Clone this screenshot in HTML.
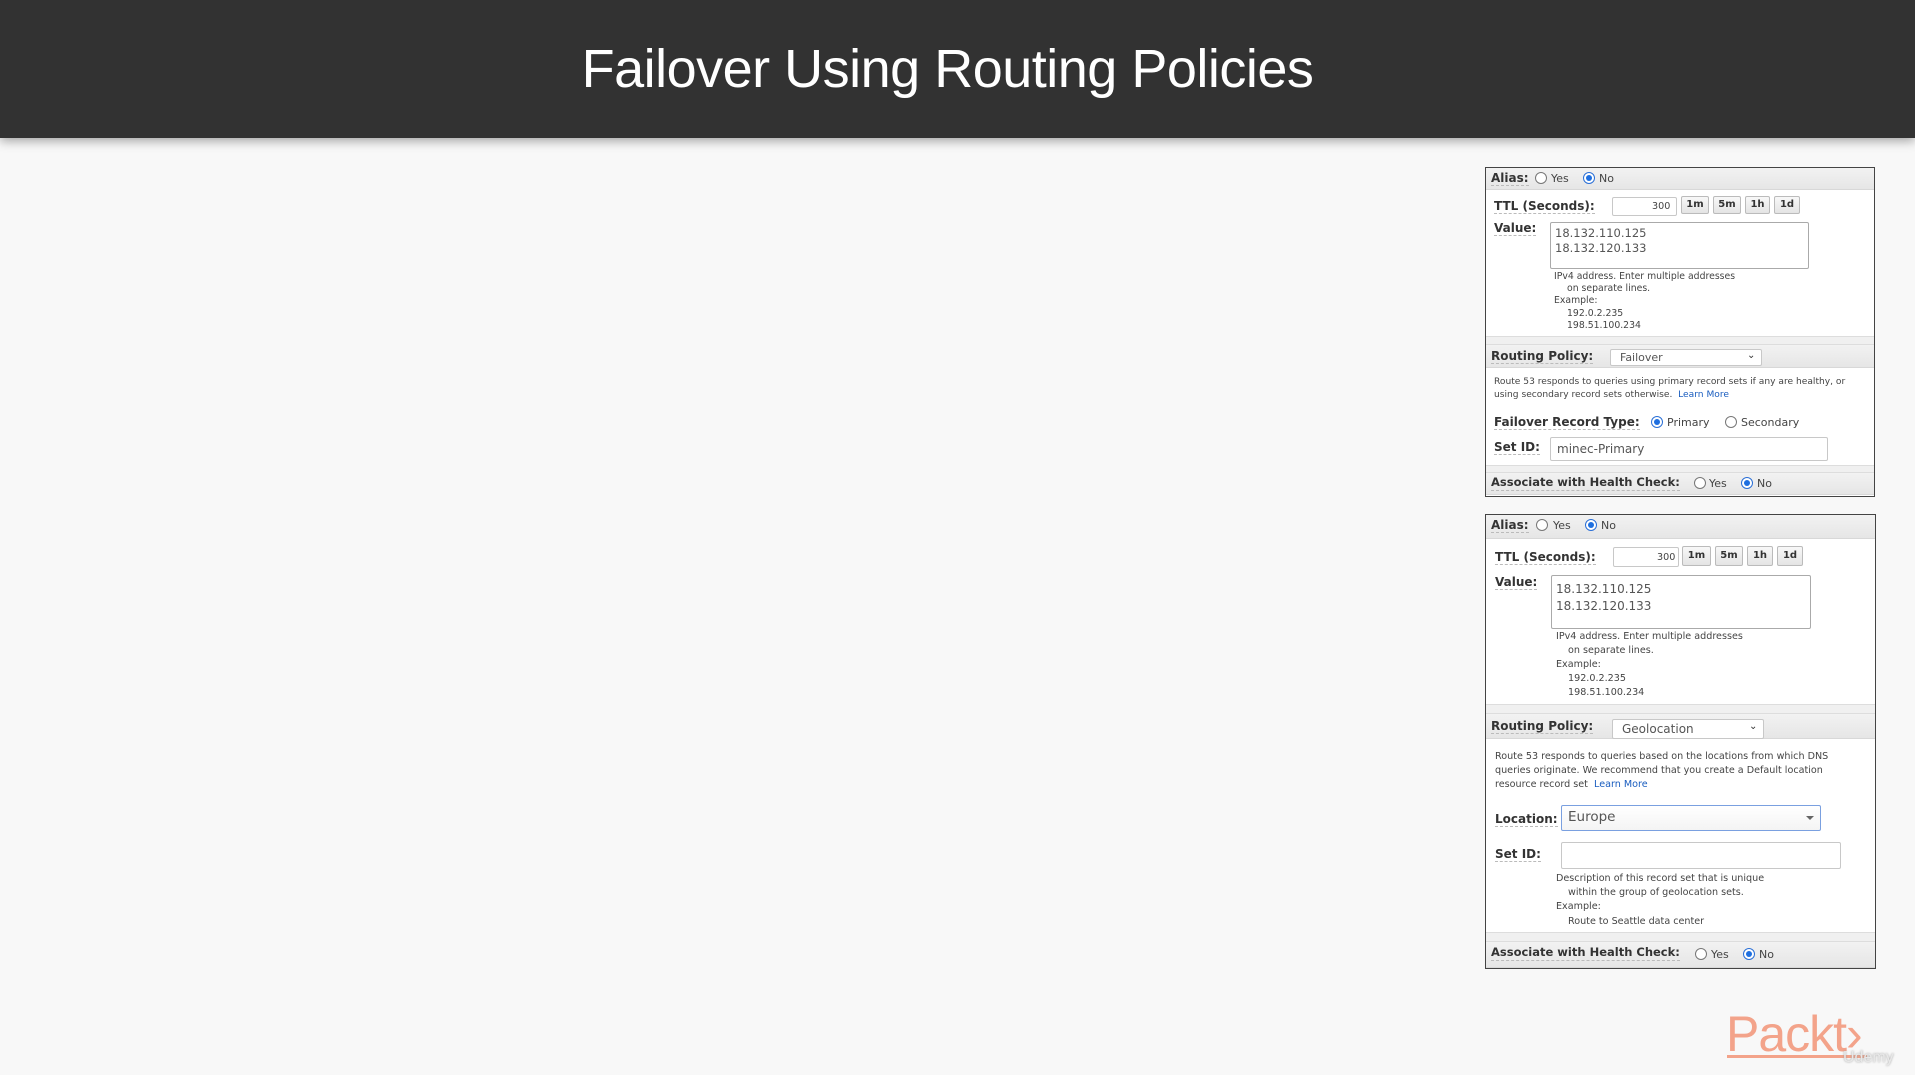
<!DOCTYPE html>
<html><head><meta charset="utf-8"><style>
*{margin:0;padding:0;box-sizing:border-box}
body{width:1915px;height:1075px;background:#f8f8f8;position:relative;overflow:hidden;font-family:"DejaVu Sans","Liberation Sans",sans-serif}
.hdr{position:absolute;left:0;top:0;width:1915px;height:138px;background:#323232;box-shadow:0 3px 10px rgba(0,0,0,.35)}
.title{position:absolute;left:0;top:0;width:1915px;text-align:center;color:#fff;font-family:"Liberation Sans",sans-serif;font-size:54px;line-height:138px;letter-spacing:-0.5px;padding-right:20px}
.panel{position:absolute;background:#fff;border:1.5px solid #444}
.bar{position:absolute;left:0;right:0;background:linear-gradient(#f2f2f2,#e6e6e6);border-bottom:1px solid #d8d8d8}
.gap{position:absolute;left:0;right:0;background:#f0f0f0;border-top:1px solid #ddd;border-bottom:1px solid #ddd}
.t{position:absolute;white-space:nowrap;color:#333;line-height:1}
.b{font-weight:bold;font-size:12px;color:#333;border-bottom:1px dashed #bbb;padding-bottom:1px}
.s{font-size:9.6px;color:#444}
.box{position:absolute;background:#fff;border:1px solid #c8c8c8;border-radius:2px}
.btn{position:absolute;background:linear-gradient(#f8f8f8,#e4e4e4);border:1px solid #bbb;border-radius:2px;font-size:10px;font-weight:bold;text-align:center;color:#333}
.r{position:absolute;width:12px;height:12px;border:1px solid #777;border-radius:50%;background:#fff}
.r.on{border-color:#2a6fd6}
.r.on::after{content:"";position:absolute;left:2px;top:2px;width:6px;height:6px;border-radius:50%;background:#1e6fe0}
.lnk{color:#1a5dbf}
</style></head><body>
<div class="hdr"></div>
<div class="title">Failover Using Routing Policies</div>

<!-- Panel 1 -->
<div class="panel" style="left:1485px;top:167px;width:390px;height:330px"></div>
<div class="bar" style="left:1486px;top:168px;width:388px;height:22px;position:absolute"></div>
<div class="t b" style="left:1491px;top:172px">Alias:</div>
<div class="r" style="left:1535px;top:172px"></div><div class="t s" style="left:1551px;top:173px;font-size:11px">Yes</div>
<div class="r on" style="left:1583px;top:172px"></div><div class="t s" style="left:1599px;top:173px;font-size:11px">No</div>
<div class="t b" style="left:1494px;top:200px">TTL (Seconds):</div>
<div class="box" style="left:1612px;top:197px;width:65px;height:19px"></div><div class="t s" style="left:1652px;top:202px">300</div>
<div class="btn" style="left:1681px;top:196px;width:28px;height:18px;line-height:16px">1m</div>
<div class="btn" style="left:1713px;top:196px;width:28px;height:18px;line-height:16px">5m</div>
<div class="btn" style="left:1745px;top:196px;width:25px;height:18px;line-height:16px">1h</div>
<div class="btn" style="left:1774px;top:196px;width:26px;height:18px;line-height:16px">1d</div>
<div class="t b" style="left:1494px;top:222px">Value:</div>
<div class="box" style="left:1550px;top:222px;width:259px;height:47px;border-color:#aaa"></div>
<div class="t" style="left:1555px;top:228px;font-size:11.5px;color:#555">18.132.110.125</div>
<div class="t" style="left:1555px;top:243px;font-size:11.5px;color:#555">18.132.120.133</div>
<div class="t s" style="left:1554px;top:272px;font-size:9.3px">IPv4 address. Enter multiple addresses</div>
<div class="t s" style="left:1567px;top:284px;font-size:9.3px">on separate lines.</div>
<div class="t s" style="left:1554px;top:296px;font-size:9.3px">Example:</div>
<div class="t s" style="left:1567px;top:309px;font-size:9.3px">192.0.2.235</div>
<div class="t s" style="left:1567px;top:321px;font-size:9.3px">198.51.100.234</div>
<div class="gap" style="left:1486px;top:336px;width:388px;height:9px;position:absolute"></div>
<div class="bar" style="left:1486px;top:345px;width:388px;height:23px;position:absolute"></div>
<div class="t b" style="left:1491px;top:350px">Routing Policy:</div>
<div class="box" style="left:1610px;top:349px;width:152px;height:17px"></div>
<div class="t" style="left:1620px;top:352px;font-size:11px;color:#555">Failover</div>
<div class="t" style="left:1747px;top:351px;font-size:10px;color:#333">&#8964;</div>
<div class="t s" style="left:1494px;top:378px;font-size:9.1px">Route 53 responds to queries using primary record sets if any are healthy, or</div>
<div class="t s" style="left:1494px;top:391px;font-size:9.1px">using secondary record sets otherwise.&nbsp; <span class="lnk">Learn More</span></div>
<div class="t b" style="left:1494px;top:416px">Failover Record Type:</div>
<div class="r on" style="left:1651px;top:416px"></div><div class="t s" style="left:1667px;top:417px;font-size:11px">Primary</div>
<div class="r" style="left:1725px;top:416px"></div><div class="t s" style="left:1741px;top:417px;font-size:11px">Secondary</div>
<div class="t b" style="left:1494px;top:441px">Set ID:</div>
<div class="box" style="left:1550px;top:437px;width:278px;height:24px"></div>
<div class="t" style="left:1557px;top:443px;font-size:12px;color:#555">minec-Primary</div>
<div class="gap" style="left:1486px;top:465px;width:388px;height:8px;position:absolute"></div>
<div class="bar" style="left:1486px;top:473px;width:388px;height:22px;position:absolute"></div>
<div class="t b" style="left:1491px;top:477px;font-size:11.5px">Associate with Health Check:</div>
<div class="r" style="left:1694px;top:477px"></div><div class="t s" style="left:1709px;top:478px;font-size:11px">Yes</div>
<div class="r on" style="left:1741px;top:477px"></div><div class="t s" style="left:1757px;top:478px;font-size:11px">No</div>

<!-- Panel 2 -->
<div class="panel" style="left:1485px;top:514px;width:391px;height:455px"></div>
<div class="bar" style="left:1486px;top:515px;width:389px;height:24px;position:absolute"></div>
<div class="t b" style="left:1491px;top:519px">Alias:</div>
<div class="r" style="left:1536px;top:519px"></div><div class="t s" style="left:1553px;top:520px;font-size:11px">Yes</div>
<div class="r on" style="left:1585px;top:519px"></div><div class="t s" style="left:1601px;top:520px;font-size:11px">No</div>
<div class="t b" style="left:1495px;top:551px">TTL (Seconds):</div>
<div class="box" style="left:1613px;top:547px;width:66px;height:20px"></div><div class="t s" style="left:1657px;top:553px">300</div>
<div class="btn" style="left:1682px;top:546px;width:29px;height:20px;line-height:18px">1m</div>
<div class="btn" style="left:1715px;top:546px;width:28px;height:20px;line-height:18px">5m</div>
<div class="btn" style="left:1747px;top:546px;width:26px;height:20px;line-height:18px">1h</div>
<div class="btn" style="left:1777px;top:546px;width:26px;height:20px;line-height:18px">1d</div>
<div class="t b" style="left:1495px;top:576px">Value:</div>
<div class="box" style="left:1551px;top:575px;width:260px;height:54px;border-color:#aaa"></div>
<div class="t" style="left:1556px;top:583px;font-size:12px;color:#555">18.132.110.125</div>
<div class="t" style="left:1556px;top:600px;font-size:12px;color:#555">18.132.120.133</div>
<div class="t s" style="left:1556px;top:632px">IPv4 address. Enter multiple addresses</div>
<div class="t s" style="left:1568px;top:646px">on separate lines.</div>
<div class="t s" style="left:1556px;top:660px">Example:</div>
<div class="t s" style="left:1568px;top:674px">192.0.2.235</div>
<div class="t s" style="left:1568px;top:688px">198.51.100.234</div>
<div class="gap" style="left:1486px;top:704px;width:389px;height:10px;position:absolute"></div>
<div class="bar" style="left:1486px;top:714px;width:389px;height:25px;position:absolute"></div>
<div class="t b" style="left:1491px;top:720px">Routing Policy:</div>
<div class="box" style="left:1612px;top:719px;width:152px;height:20px"></div>
<div class="t" style="left:1622px;top:723px;font-size:12px;color:#555">Geolocation</div>
<div class="t" style="left:1749px;top:722px;font-size:10px;color:#333">&#8964;</div>
<div class="t s" style="left:1495px;top:752px">Route 53 responds to queries based on the locations from which DNS</div>
<div class="t s" style="left:1495px;top:766px">queries originate. We recommend that you create a Default location</div>
<div class="t s" style="left:1495px;top:780px">resource record set&nbsp; <span class="lnk">Learn More</span></div>
<div class="t b" style="left:1495px;top:813px">Location:</div>
<div class="box" style="left:1561px;top:805px;width:260px;height:26px;border-color:#7aa0e0;border-width:1.5px;background:linear-gradient(#fff,#f4f4f4)"></div>
<div class="t" style="left:1568px;top:811px;font-size:13.5px;color:#555">Europe</div>
<div style="position:absolute;left:1806px;top:816px;width:0;height:0;border-left:4px solid transparent;border-right:4px solid transparent;border-top:4px solid #666"></div>
<div class="t b" style="left:1495px;top:848px">Set ID:</div>
<div class="box" style="left:1561px;top:842px;width:280px;height:27px"></div>
<div class="t s" style="left:1556px;top:874px">Description of this record set that is unique</div>
<div class="t s" style="left:1568px;top:888px">within the group of geolocation sets.</div>
<div class="t s" style="left:1556px;top:902px">Example:</div>
<div class="t s" style="left:1568px;top:917px">Route to Seattle data center</div>
<div class="gap" style="left:1486px;top:932px;width:389px;height:10px;position:absolute"></div>
<div class="bar" style="left:1486px;top:942px;width:389px;height:26px;position:absolute"></div>
<div class="t b" style="left:1491px;top:947px;font-size:11.5px">Associate with Health Check:</div>
<div class="r" style="left:1695px;top:948px"></div><div class="t s" style="left:1711px;top:949px;font-size:11px">Yes</div>
<div class="r on" style="left:1743px;top:948px"></div><div class="t s" style="left:1759px;top:949px;font-size:11px">No</div>

<!-- Packt logo -->
<div class="t" style="left:1726px;top:1009px;font-family:'Liberation Sans',sans-serif;font-size:50px;color:#f3a38a;letter-spacing:-1px">Packt&#8250;</div>
<div style="position:absolute;left:1727px;top:1055px;width:140px;height:3px;background:#f3a38a"></div>
<div class="t" style="left:1843px;top:1050px;font-family:'Liberation Sans',sans-serif;font-size:16px;color:#e8e8e8;text-shadow:0 0 2px #999">Udemy</div>
</body></html>
